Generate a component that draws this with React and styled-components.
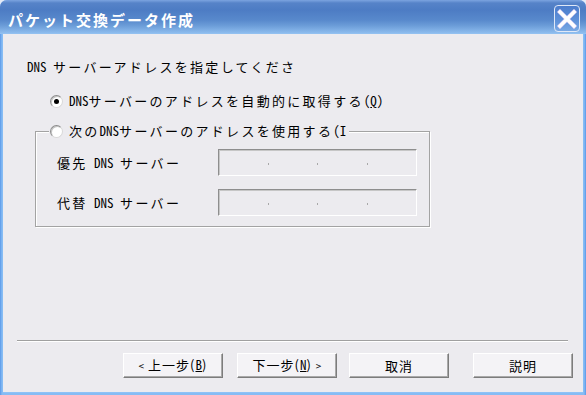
import styled, { createGlobalStyle } from "styled-components";

const Global = createGlobalStyle`
  html, body {
    margin: 0;
    padding: 0;
    background: #e4eaf6;
  }
  body {
    font-family: "Noto Sans CJK JP", "Noto Sans CJK SC", sans-serif;
  }
`;

const Window = styled.div`
  width: 586px;
  height: 395px;
  display: flex;
  flex-direction: column;
  border-radius: 7px 7px 0 0;
  overflow: hidden;
  background: linear-gradient(to right, #5a98e8 0, #86bcf4 2px, #86bcf4 584px, #5a98e8 586px);
`;

const TitleBar = styled.div`
  height: 34px;
  flex: none;
  display: flex;
  justify-content: space-between;
  padding: 0 6px 0 8px;
  box-sizing: border-box;
  background: linear-gradient(
    to bottom,
    #7ca4e0 0,
    #5683c8 3px,
    #4d7cc4 10px,
    #5889cc 20px,
    #6d9ed9 26px,
    #8dbcee 33px,
    #96c4f2 34px
  );
`;

const Title = styled.div`
  color: #fff;
  font-size: 15px;
  font-weight: 700;
  letter-spacing: 2px;
  line-height: 18px;
  padding-top: 11px;
`;

const CloseButton = styled.div`
  width: 26px;
  height: 27px;
  margin-top: 5px;
  box-sizing: border-box;
  border: 1px solid #dfe8f7;
  border-radius: 4px;
  background: linear-gradient(to bottom, #4c7dcc, #5f92da 60%, #79a9e4);
  display: flex;
  align-items: center;
  justify-content: center;
`;

const Body = styled.div`
  flex: 1;
  margin: 0 3px 3px;
  background: #ecebef;
  display: flex;
  flex-direction: column;
  font-size: 13px;
  color: #000;
  box-shadow: 0 1px 0 #8ec2f6;
`;

const Text = styled.div`
  line-height: 16px;
  height: 16px;
  letter-spacing: 2.3px;
  white-space: nowrap;
`;

const Prompt = styled(Text)`
  margin: 25px 0 0 24px;
`;

const Lat = styled.span`
  font-feature-settings: "hwid";
  letter-spacing: 0;
`;

const U = styled.span`
  text-decoration: underline;
  letter-spacing: 0;
  font-feature-settings: "hwid";
`;

const RadioRow = styled.div`
  display: flex;
  align-items: center;
  gap: 6px;
  height: 16px;
  margin: ${(p) => p.$margin || "0"};
  white-space: nowrap;
  line-height: 16px;
  letter-spacing: 2.3px;
`;

const Radio = styled.span`
  width: 13px;
  height: 13px;
  flex: none;
  box-sizing: border-box;
  border-radius: 50%;
  border: 1px solid;
  border-color: #8c8c8c #d8d8d8 #d8d8d8 #8c8c8c;
  background: #fff;
  box-shadow: inset 1px 1px 0 #c4c4c4;
  display: flex;
  align-items: center;
  justify-content: center;

  &::after {
    content: "";
    width: 5px;
    height: 5px;
    border-radius: 50%;
    background: ${(p) => (p.$checked ? "#000" : "transparent")};
  }
`;

const Group = styled.fieldset`
  margin: 14px 0 0 32px;
  width: 395px;
  box-sizing: border-box;
  padding: 0;
  border: 1px solid #a3a3a3;
  box-shadow: 1px 1px 0 #fff, inset 1px 1px 0 #fff;
  min-width: 0;
`;

const Legend = styled.legend`
  padding: 0 3px 0 1px;
  margin-left: 13px;
  background: #ecebef;
`;

const Fields = styled.div`
  display: grid;
  grid-template-columns: 161px 199px;
  grid-auto-rows: 27px;
  row-gap: 13px;
  padding: 10px 12px 10px 21px;
  align-items: center;
`;

const Label = styled(Text)``;

const IpBox = styled.div`
  height: 27px;
  box-sizing: border-box;
  border: 1px solid;
  border-color: #8e8e8e #fff #fff #8e8e8e;
  box-shadow: inset 1px 1px 0 #c6c6c6;
  display: flex;
  align-items: center;
  justify-content: space-evenly;
`;

const Dot = styled.span`
  width: 1px;
  height: 2px;
  background: #a8a8a8;
  margin-top: 2px;
`;

const Spacer = styled.div`
  flex: 1;
`;

const Separator = styled.div`
  height: 1px;
  margin: 0 15px 0 14px;
  background: #a0a0a0;
  box-shadow: 0 1px 0 #fff;
`;

const ButtonRow = styled.div`
  display: flex;
  justify-content: flex-end;
  margin-top: 12px;
  padding: 0 10px 14px 0;
`;

const Button = styled.button`
  width: 100px;
  height: 25px;
  margin-left: ${(p) => p.$space || 0}px;
  box-sizing: border-box;
  padding: 0;
  font-family: inherit;
  font-size: 13px;
  color: #000;
  letter-spacing: 1px;
  background: #f4f3f6;
  border: 1px solid;
  border-color: #fff #7c7c7c #7c7c7c #fff;
  box-shadow: inset -1px -1px 0 #a9a9a9;
  line-height: 16px;
`;

const Small = styled.span`
  font-size: 10px;
  letter-spacing: 0;
`;

const CloseIcon = () => (
  <svg width="20" height="20" viewBox="0 0 20 20">
    <path d="M3 3 L17 17 M17 3 L3 17" stroke="#e4d4f6" strokeWidth="4.4" strokeLinecap="square" />
    <path d="M3 3 L17 17 M17 3 L3 17" stroke="#fff" strokeWidth="3.2" strokeLinecap="square" />
  </svg>
);

const IpField = () => (
  <IpBox>
    <Dot />
    <Dot />
    <Dot />
  </IpBox>
);

export default function App() {
  return (
    <>
      <Global />
      <Window>
        <TitleBar>
          <Title>パケット交換データ作成</Title>
          <CloseButton>
            <CloseIcon />
          </CloseButton>
        </TitleBar>
        <Body>
          <Prompt>
            <Lat>DNS </Lat>サーバーアドレスを指定してくださ
          </Prompt>
          <RadioRow $margin="18px 0 0 47px">
            <Radio $checked />
            <span>
              <Lat>DNS</Lat>サーバーのアドレスを自動的に取得する<Lat>(</Lat>
              <U>Q</U>
              <Lat>)</Lat>
            </span>
          </RadioRow>
          <Group>
            <Legend>
              <RadioRow>
                <Radio />
                <span>
                  次の<Lat>DNS</Lat>サーバーのアドレスを使用する<Lat>(I</Lat>
                </span>
              </RadioRow>
            </Legend>
            <Fields>
              <Label>
                優先<Lat> DNS </Lat>サーバー
              </Label>
              <IpField />
              <Label>
                代替<Lat> DNS </Lat>サーバー
              </Label>
              <IpField />
            </Fields>
          </Group>
          <Spacer />
          <Separator />
          <ButtonRow>
            <Button>
              <Small>&lt;</Small> 上一步(<U>B</U>)
            </Button>
            <Button $space={14}>
              下一步(<U>N</U>) <Small>&gt;</Small>
            </Button>
            <Button $space={12}>取消</Button>
            <Button $space={24}>説明</Button>
          </ButtonRow>
        </Body>
      </Window>
    </>
  );
}
